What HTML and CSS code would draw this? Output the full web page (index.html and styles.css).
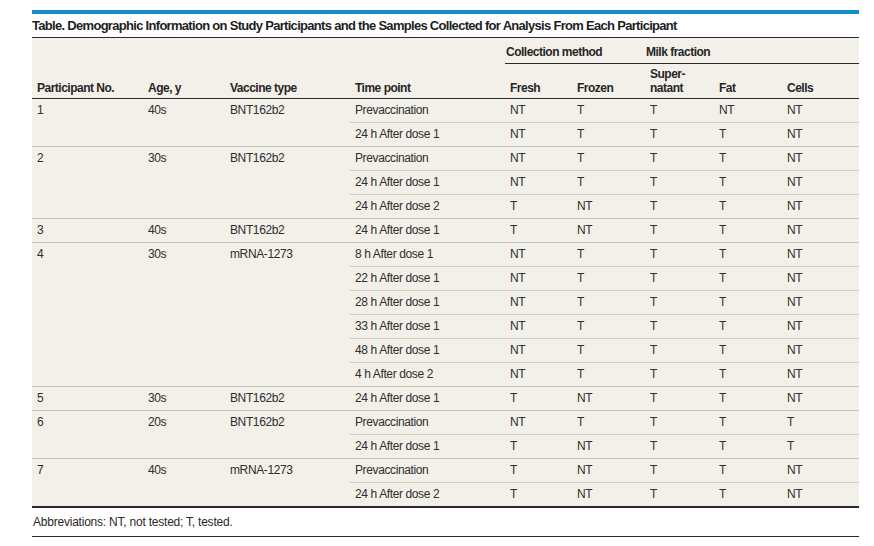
FILE: index.html
```html
<!DOCTYPE html>
<html>
<head>
<meta charset="utf-8">
<link rel="stylesheet" href="styles.css">
</head>
<body>
<div class="figure">
  <div class="bar"></div>
  <div class="title">Table. Demographic Information on Study Participants and the Samples Collected for Analysis From Each Participant</div>
  <table class="data">
    <colgroup>
      <col class="c1"><col class="c2"><col class="c3"><col class="c4">
      <col class="c5"><col class="c6"><col class="c7"><col class="c8"><col class="c9">
    </colgroup>
    <thead>
      <tr class="h1">
        <th></th><th></th><th></th><th></th>
        <th colspan="2" class="span span-coll"><div>Collection method</div></th>
        <th colspan="3" class="span span-milk"><div>Milk fraction</div></th>
      </tr>
      <tr class="h2">
        <th>Participant No.</th><th>Age, y</th><th>Vaccine type</th><th>Time point</th>
        <th>Fresh</th><th>Frozen</th><th>Super-<br>natant</th><th>Fat</th><th>Cells</th>
      </tr>
    </thead>
    <tbody>
      <tr class="grp"><td rowspan="2" class="rs">1</td><td rowspan="2" class="rs">40s</td><td rowspan="2" class="rs">BNT162b2</td><td>Prevaccination</td><td>NT</td><td>T</td><td>T</td><td>NT</td><td>NT</td></tr>
      <tr class="sub"><td>24 h After dose 1</td><td>NT</td><td>T</td><td>T</td><td>T</td><td>NT</td></tr>
      <tr class="grp"><td rowspan="3" class="rs">2</td><td rowspan="3" class="rs">30s</td><td rowspan="3" class="rs">BNT162b2</td><td>Prevaccination</td><td>NT</td><td>T</td><td>T</td><td>T</td><td>NT</td></tr>
      <tr class="sub"><td>24 h After dose 1</td><td>NT</td><td>T</td><td>T</td><td>T</td><td>NT</td></tr>
      <tr class="sub"><td>24 h After dose 2</td><td>T</td><td>NT</td><td>T</td><td>T</td><td>NT</td></tr>
      <tr class="grp"><td class="rs">3</td><td class="rs">40s</td><td class="rs">BNT162b2</td><td>24 h After dose 1</td><td>T</td><td>NT</td><td>T</td><td>T</td><td>NT</td></tr>
      <tr class="grp"><td rowspan="6" class="rs">4</td><td rowspan="6" class="rs">30s</td><td rowspan="6" class="rs">mRNA-1273</td><td>8 h After dose 1</td><td>NT</td><td>T</td><td>T</td><td>T</td><td>NT</td></tr>
      <tr class="sub"><td>22 h After dose 1</td><td>NT</td><td>T</td><td>T</td><td>T</td><td>NT</td></tr>
      <tr class="sub"><td>28 h After dose 1</td><td>NT</td><td>T</td><td>T</td><td>T</td><td>NT</td></tr>
      <tr class="sub"><td>33 h After dose 1</td><td>NT</td><td>T</td><td>T</td><td>T</td><td>NT</td></tr>
      <tr class="sub"><td>48 h After dose 1</td><td>NT</td><td>T</td><td>T</td><td>T</td><td>NT</td></tr>
      <tr class="sub"><td>4 h After dose 2</td><td>NT</td><td>T</td><td>T</td><td>T</td><td>NT</td></tr>
      <tr class="grp"><td class="rs">5</td><td class="rs">30s</td><td class="rs">BNT162b2</td><td>24 h After dose 1</td><td>T</td><td>NT</td><td>T</td><td>T</td><td>NT</td></tr>
      <tr class="grp"><td rowspan="2" class="rs">6</td><td rowspan="2" class="rs">20s</td><td rowspan="2" class="rs">BNT162b2</td><td>Prevaccination</td><td>NT</td><td>T</td><td>T</td><td>T</td><td>T</td></tr>
      <tr class="sub"><td>24 h After dose 1</td><td>T</td><td>NT</td><td>T</td><td>T</td><td>T</td></tr>
      <tr class="grp"><td rowspan="2" class="rs">7</td><td rowspan="2" class="rs">40s</td><td rowspan="2" class="rs">mRNA-1273</td><td>Prevaccination</td><td>T</td><td>NT</td><td>T</td><td>T</td><td>NT</td></tr>
      <tr class="sub"><td>24 h After dose 2</td><td>T</td><td>NT</td><td>T</td><td>T</td><td>NT</td></tr>
    </tbody>
  </table>
  <div class="foot">Abbreviations: NT, not tested; T, tested.</div>
</div>
</body>
</html>
```

FILE: styles.css
```css
html, body {
  margin: 0;
  padding: 0;
  background: #ffffff;
}

body {
  font-family: "Liberation Sans", Arial, sans-serif;
  color: #2e2e2e;
}

.figure {
  width: 827px;
  margin: 10px 0 0 32px;
}

.bar {
  height: 4px;
  background: #1190c1;
}

.title {
  height: 23px;
  line-height: 24px;
  font-size: 13px;
  font-weight: bold;
  letter-spacing: -0.7px;
  color: #1e1e1e;
  border-bottom: 1px solid #2a2a2a;
  white-space: nowrap;
}

.c1 { width: 111px; }
.c2 { width: 82px; }
.c3 { width: 125px; }
.c4 { width: 155px; }
.c5 { width: 67px; }
.c6 { width: 73px; }
.c7 { width: 69px; }
.c8 { width: 68px; }
.c9 { width: 77px; }

.data {
  width: 827px;
  table-layout: fixed;
  border-collapse: collapse;
  background: #f2f0e8;
  font-size: 12px;
  letter-spacing: -0.38px;
  border-bottom: 2px solid #2a2a2a;
}

.data th {
  text-align: left;
  font-weight: bold;
  letter-spacing: -0.5px;
  padding: 0 5px;
  vertical-align: bottom;
  line-height: 14px;
  color: #262626;
}

.data .h1 th {
  height: 25px;
  vertical-align: middle;
  padding: 0;
}

.data .span div {
  border-bottom: 1px solid #2a2a2a;
  height: 26px;
  line-height: 29px;
  box-sizing: border-box;
}

.data .span-coll {
  padding: 0 5px 0 5px;
}

.data .span-coll div {
  padding-left: 1px;
}

.data .span-milk {
  padding: 0 0 0 4px;
}

.data .span-milk div {
  padding-left: 1px;
}

.data .h2 th {
  height: 31px;
  padding-bottom: 3px;
  border-bottom: 1px solid #2a2a2a;
}

.data td {
  height: 23px;
  line-height: 23px;
  padding: 0 5px;
  vertical-align: top;
  white-space: nowrap;
}

.data tr.grp td {
  border-top: 1px solid #c4c2b8;
}

.data tr.sub td {
  border-top: 1px solid #d0cec5;
}

.data tr.grp:first-child td {
  border-top: none;
}

.foot {
  height: 28px;
  line-height: 29px;
  font-size: 12px;
  letter-spacing: -0.22px;
  color: #2a2a2a;
  padding-left: 1px;
  border-bottom: 1px solid #2a2a2a;
}
```
